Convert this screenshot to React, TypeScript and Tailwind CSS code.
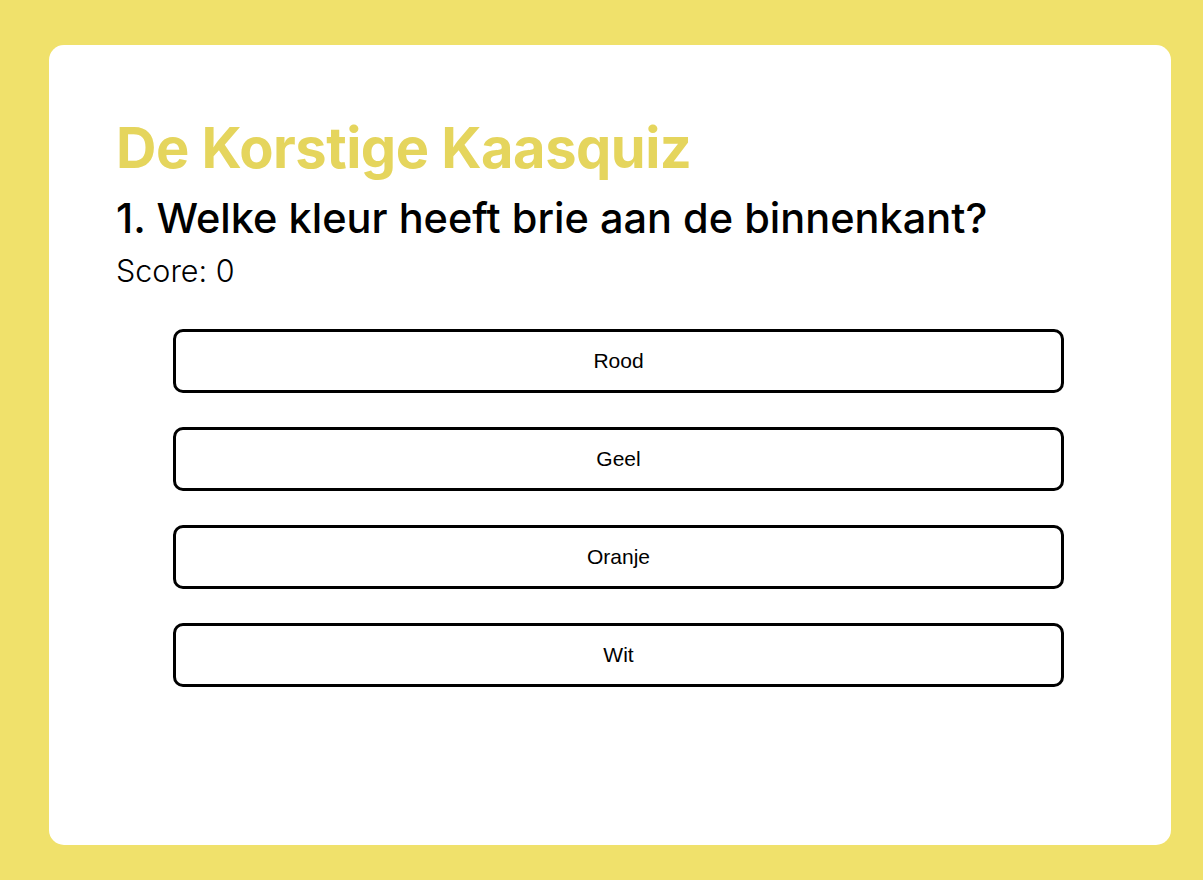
const answers = ["Rood", "Geel", "Oranje", "Wit"];

export default function App() {
  return (
    <div className="min-h-screen bg-[#f0e16b] p-[45px_32px_35px_49px]">
      <div className="bg-white rounded-[15px] h-[800px] w-[1122px] pt-[71px] px-[67px]">
        <h1 className="font-['Inter',sans-serif] font-bold text-[#e5d55d] text-[56px] leading-[64px] tracking-[-0.5px]">
          De Korstige Kaasquiz
        </h1>
        <h2 className="font-['Inter',sans-serif] font-medium text-black text-[41.5px] leading-[48px] mt-[14px]">
          1. Welke kleur heeft brie aan de binnenkant?
        </h2>
        <p className="font-['Inter',sans-serif] font-light text-black text-[30.5px] leading-[40px] mt-[9px]">
          Score: 0
        </p>
        <div className="flex flex-col gap-[34px] mt-[38px] ml-[57px] w-[891px]">
          {answers.map((a) => (
            <button
              key={a}
              className="h-[64px] w-full rounded-[10px] border-[3px] border-black bg-white font-['Liberation_Sans',Arial,sans-serif] text-[21px] text-black"
            >
              {a}
            </button>
          ))}
        </div>
      </div>
    </div>
  );
}
